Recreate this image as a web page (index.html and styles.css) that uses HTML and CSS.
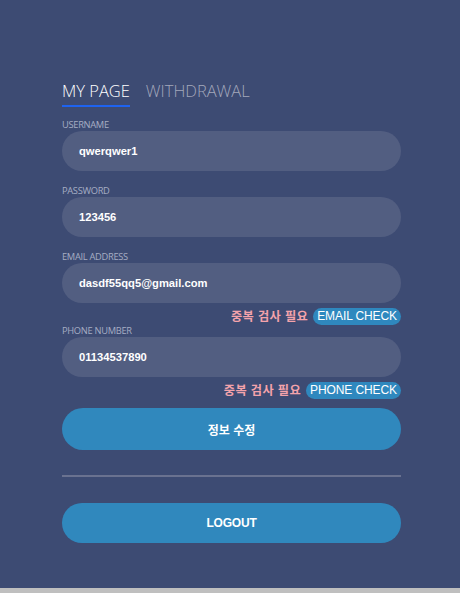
FILE: index.html
```html
<!DOCTYPE html>
<html lang="ko">
<head>
<meta charset="utf-8">
<link rel="stylesheet" href="styles.css">
</head>
<body>
<div class="panel">
  <div class="wrap">
    <div class="tabs">
      <span class="tab active">MY PAGE</span>
      <span class="tab">WITHDRAWAL</span>
    </div>
    <div class="field">
      <div class="label">USERNAME</div>
      <div class="input">qwerqwer1</div>
    </div>
    <div class="field">
      <div class="label">PASSWORD</div>
      <div class="input">123456</div>
    </div>
    <div class="field">
      <div class="label">EMAIL ADDRESS</div>
      <div class="input">dasdf55qq5@gmail.com</div>
      <div class="check"><span class="warn">중복 검사 필요</span><span class="badge">EMAIL CHECK</span></div>
    </div>
    <div class="field tight">
      <div class="label">PHONE NUMBER</div>
      <div class="input">01134537890</div>
      <div class="check"><span class="warn">중복 검사 필요</span><span class="badge">PHONE CHECK</span></div>
    </div>
    <div class="btn primary">정보 수정</div>
    <div class="divider"></div>
    <div class="btn logout">LOGOUT</div>
  </div>
</div>
</body>
</html>
```
FILE: styles.css
```css
* { box-sizing: border-box; }
html, body { margin: 0; padding: 0; }
body { background: #bfbfbf; height: 593px; overflow: hidden; font-family: "Open Sans", "Noto Sans", sans-serif; }
.panel { background: #3d4b73; height: 588px; padding-top: 77px; }
.wrap { margin-left: 62px; width: 339px; display: flex; flex-direction: column; }
.tabs { display: flex; gap: 16px; height: 30px; }
.tab { font-size: 16.5px; font-weight: 300; color: #a3a8bb; line-height: 27px; height: 30px; }
.tab.active { color: #ffffff; border-bottom: 2px solid #1e63f0; }
.field { margin-top: 13px; display: flex; flex-direction: column; }
.field + .field { margin-top: 15px; }
.label { font-size: 9.3px; color: #a6adc3; line-height: 10px; height: 10px; margin-bottom: 1px; letter-spacing: -0.3px; }
.input { height: 40px; border-radius: 20px; background: #525e81; color: #fff; font-family: "Liberation Sans", Arial, sans-serif; font-weight: bold; font-size: 11.2px; line-height: 40px; padding-left: 17px; }
.check { display: flex; justify-content: flex-end; align-items: center; gap: 5px; margin-top: 5px; height: 17px; }
.warn { font-family: "Noto Sans CJK KR", sans-serif; font-weight: bold; font-size: 12.2px; letter-spacing: 0.4px; color: #f4a3ab; line-height: 17px; }
.badge { background: #2f88be; color: #fff; font-family: "Liberation Sans", Arial, sans-serif; font-size: 12px; line-height: 17px; height: 17px; padding: 0 4px; border-radius: 9px; letter-spacing: -0.1px; }
.field.field.tight { margin-top: 1px; }
.btn { height: 42px; border-radius: 21px; background: #3088bd; color: #fff; display: flex; align-items: center; justify-content: center; font-family: "Liberation Sans", "Noto Sans CJK KR", sans-serif; font-weight: bold; font-size: 12px; }
.btn.primary { margin-top: 9px; font-family: "Noto Sans CJK KR", sans-serif; }
.btn.logout { height: 40px; border-radius: 20px; letter-spacing: -0.2px; }
.divider { height: 2px; background: #6a7290; margin-top: 25px; margin-bottom: 26px; }
```
